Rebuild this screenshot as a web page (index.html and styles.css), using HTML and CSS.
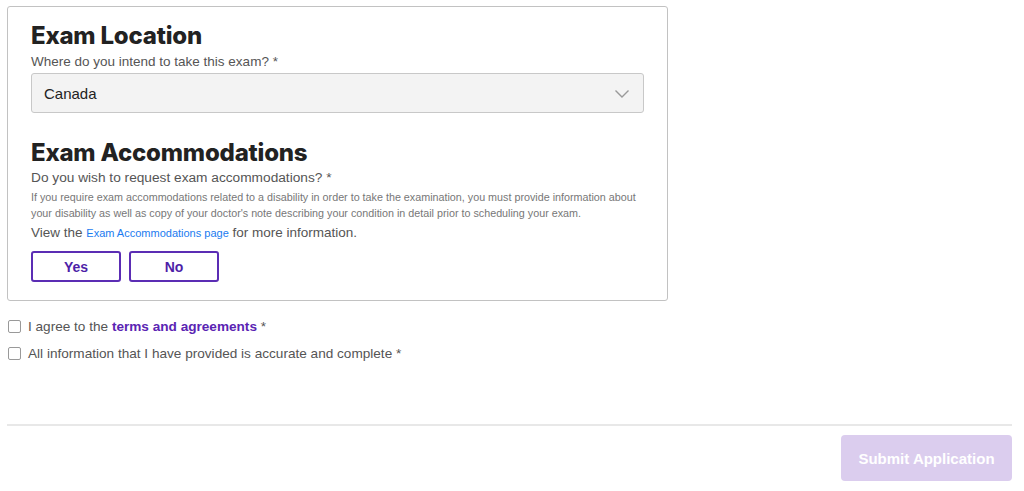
FILE: index.html
```html
<!DOCTYPE html>
<html lang="en">
<head>
  <meta charset="UTF-8">
  <title>Exam Application</title>
  <link rel="stylesheet" href="styles.css">
</head>
<body>

  <form class="application" id="examForm">
    <div class="exam-card">
      <h2>Exam Location</h2>
      <label class="field-label" for="location">Where do you intend to take this exam? *</label>
      <div class="select-wrap">
        <select id="location">
          <option>Canada</option>
          <option>United States</option>
          <option>Other</option>
        </select>
        <svg class="chevron" width="16" height="10" viewBox="0 0 16 10">
          <path d="M1.5 1.5 L8 8 L14.5 1.5" fill="none" stroke="#999" stroke-width="1.4"/>
        </svg>
      </div>

      <h2 class="section-gap">Exam Accommodations</h2>
      <p class="field-label question">Do you wish to request exam accommodations? *</p>
      <p class="help-text">If you require exam accommodations related to a disability in order to take the examination, you must provide information about your disability as well as copy of your doctor's note describing your condition in detail prior to scheduling your exam.</p>
      <p class="view-line">View the <a href="#">Exam Accommodations page</a> for more information.</p>
      <div class="choice-row">
        <button type="button" class="choice">Yes</button>
        <button type="button" class="choice">No</button>
      </div>
    </div>

    <div class="checks">
      <label class="check"><input type="checkbox"><span>I agree to the <a href="#">terms and agreements</a> *</span></label>
      <label class="check"><input type="checkbox"><span>All information that I have provided is accurate and complete *</span></label>
    </div>

    <div class="form-footer">
      <button type="submit" class="submit-btn" disabled>Submit Application</button>
    </div>
  </form>

</body>
</html>
```

FILE: styles.css
```css
* {
  box-sizing: border-box;
}

body {
  margin: 0;
  padding: 6px 12px 0 7px;
  font-family: 'Liberation Sans', Arial, Helvetica, sans-serif;
  color: #444;
  background: #fff;
}

.exam-card {
  width: 661px;
  border: 1px solid #c2c2c2;
  border-radius: 3px;
  padding: 14px 23px 18px 23px;
}

h2 {
  margin: 0;
  font-family: Inter, 'Noto Sans', sans-serif;
  font-weight: 800;
  font-size: 24px;
  line-height: 30px;
  letter-spacing: -0.2px;
  color: #222;
}

.section-gap {
  margin-top: 25px;
}

.field-label {
  display: block;
  margin: 2px 0 2px;
  font-size: 13.5px;
  line-height: 18px;
  color: #555;
}

.question {
  font-size: 13.7px;
  margin-top: 1px;
}

.select-wrap {
  position: relative;
  width: 613px;
}

select {
  display: block;
  width: 100%;
  height: 40px;
  padding: 0 40px 0 12px;
  font-family: inherit;
  font-size: 15px;
  color: #222;
  background: #f3f3f3;
  border: 1px solid #c8c8c8;
  border-radius: 3px;
  appearance: none;
  -webkit-appearance: none;
}

.chevron {
  position: absolute;
  right: 14px;
  top: 16px;
  pointer-events: none;
}

.help-text {
  margin: 1px 0 0;
  font-size: 10.75px;
  line-height: 16px;
  color: #777;
}

.view-line {
  margin: 3px 0 0;
  font-size: 13.5px;
  line-height: 18px;
  color: #555;
}

.view-line a {
  font-size: 11px;
  color: #1a7bf0;
  text-decoration: none;
}

.choice-row {
  display: flex;
  gap: 8px;
  margin-top: 9px;
}

.choice {
  width: 90px;
  height: 31px;
  background: #fff;
  border: 2px solid #5b2db4;
  border-radius: 3px;
  color: #4e1fa8;
  font-family: inherit;
  font-size: 14px;
  font-weight: bold;
  cursor: pointer;
}

.checks {
  margin-top: 16px;
  display: flex;
  flex-direction: column;
  gap: 8px;
}

.check {
  display: flex;
  align-items: center;
  gap: 7px;
  font-size: 13.6px;
  line-height: 19px;
  color: #555;
}

.check input {
  margin: 0 0 0 1px;
  width: 13px;
  height: 13px;
  appearance: none;
  -webkit-appearance: none;
  border: 1px solid #999;
  border-radius: 2px;
  background: #fff;
}

.check a {
  color: #5a24b3;
  font-weight: bold;
  text-decoration: none;
}

.form-footer {
  margin-top: 61px;
  border-top: 2px solid #e8e8e8;
  padding-top: 9px;
  display: flex;
  justify-content: flex-end;
}

.submit-btn {
  width: 171px;
  height: 46px;
  background: #dbcdee;
  border: none;
  border-radius: 4px;
  color: #fff;
  font-family: inherit;
  font-size: 15px;
  font-weight: bold;
}
```
